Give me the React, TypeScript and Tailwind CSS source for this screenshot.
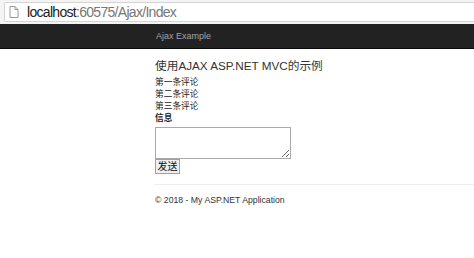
export default function App() {
  const cjk = { fontFamily: '"Liberation Sans", "Noto Sans CJK SC", sans-serif' };

  return (
    <div className="w-[474px] h-[258px] bg-white overflow-hidden" style={cjk}>
      {/* browser address bar */}
      <div className="h-[24px] bg-[#f4f4f4] pt-[2px]">
        <div className="ml-[4px] h-[20px] flex items-center bg-white border border-r-0 border-[#d4d4d4] rounded-l-[2px]">
          <svg width="10" height="12" viewBox="0 0 10 12" className="ml-[4px] mr-[8px]">
            <path d="M1 0.5h5l3 3v8H1z" fill="none" stroke="#9a9a9a" strokeWidth="1" />
            <path d="M6 0.5v3h3" fill="none" stroke="#9a9a9a" strokeWidth="1" />
          </svg>
          <span className="text-[14px] tracking-[-0.7px] leading-none">
            <span className="text-[#222]">localhost</span>
            <span className="text-[#777]">:60575/Ajax/Index</span>
          </span>
        </div>
      </div>

      {/* navbar */}
      <div className="h-[25px] bg-[#222] border-b border-[#080808] flex items-center pl-[156px] pt-[2px]">
        <span className="text-[9px] text-[#a4a4a4]">Ajax Example</span>
      </div>

      {/* body */}
      <div className="pl-[155px]">
        <h2 className="mt-[10px] text-[11.7px] leading-[14px] text-[#333]">使用AJAX ASP.NET MVC的示例</h2>
        <div className="mt-[3px] text-[8.7px] leading-[12px] text-[#222]">
          <div>第一条评论</div>
          <div>第二条评论</div>
          <div>第三条评论</div>
          <div className="font-bold">信息</div>
        </div>
        <textarea className="mt-[3px] block w-[136px] h-[32px] border border-[#a9a9a9] bg-white resize-y" />
        <button className="block h-[15px] w-[25px] border border-[#a0a0a0] bg-[#efefef] text-[10px] leading-none text-[#111] p-0">
          发送
        </button>
        <div className="mt-[10px] border-t border-[#eee]" />
        <div className="mt-[9px] text-[8.7px] leading-[12px] text-[#333]">© 2018 - My ASP.NET Application</div>
      </div>
    </div>
  );
}
